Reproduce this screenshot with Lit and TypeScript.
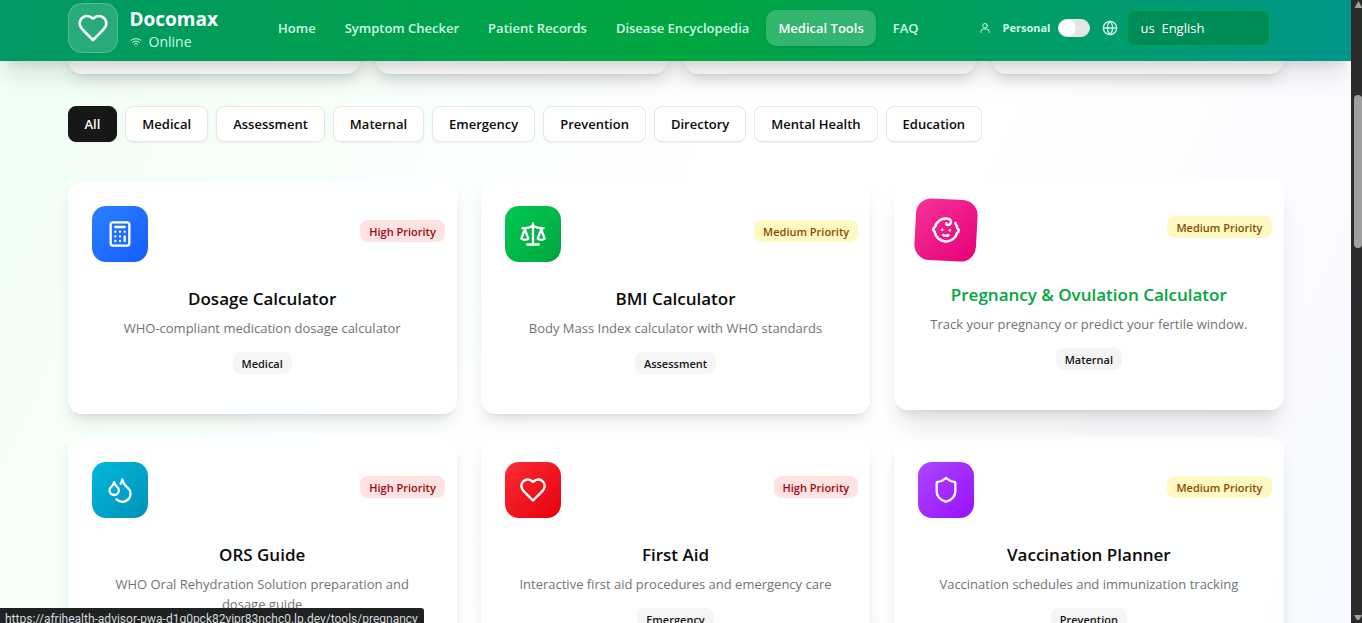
import { LitElement, html, svg, css, SVGTemplateResult } from "lit";
import { customElement, state } from "lit/decorators.js";
import { classMap } from "lit/directives/class-map.js";

const icons: Record<string, SVGTemplateResult> = {
  heart: svg`<path d="M19 14c1.490-1.460 3-3.210 3-5.500A5.500 5.500 0 0 0 16.500 3c-1.760 0-3 .5-4.500 2-1.500-1.500-2.740-2-4.500-2A5.500 5.500 0 0 0 2 8.500c0 2.300 1.500 4.050 3 5.500l7 7Z"/>`,
  wifi: svg`<path d="M12 20h.01M2 8.820a15 15 0 0 1 20 0M5 12.859a10 10 0 0 1 14 0M8.500 16.429a5 5 0 0 1 7 0"/>`,
  user: svg`<circle cx="12" cy="7.500" r="4.500"/><path d="M4 21v-2a5 5 0 0 1 5-5h6a5 5 0 0 1 5 5v2"/>`,
  globe: svg`<circle cx="12" cy="12" r="10"/><path d="M12 2a14.500 14.500 0 0 0 0 20 14.500 14.500 0 0 0 0-20M2 12h20"/>`,
  chevron: svg`<path d="m6 9 6 6 6-6"/>`,
  calculator: svg`<rect width="16" height="20" x="4" y="2" rx="2"/><path d="M8 6h8M16 14v4M16 10h.01M12 10h.01M8 10h.01M12 14h.01M8 14h.01M12 18h.01M8 18h.01"/>`,
  scale: svg`<path d="m16 16 3-8 3 8c-.87.65-1.920 1-3 1s-2.130-.35-3-1ZM2 16l3-8 3 8c-.87.65-1.920 1-3 1s-2.130-.35-3-1ZM7 21h10M12 3v18M3 7h2c2 0 5-1 7-2 2 1 5 2 7 2h2"/>`,
  baby: svg`<path d="M9 12h.01M15 12h.01M10 16c.5.3 1.200.5 2 .5s1.500-.2 2-.5"/><path d="M19 6.300a9 9 0 0 1 1.800 3.900 2 2 0 0 1 0 3.600 9 9 0 0 1-17.600 0 2 2 0 0 1 0-3.600A9 9 0 0 1 12 3c2 0 3.500 1.100 3.500 2.500s-.9 2.500-2 2.500c-.8 0-1.500-.4-1.500-1"/>`,
  droplets: svg`<path d="M7 16.300c2.200 0 4-1.830 4-4.050 0-1.160-.57-2.260-1.710-3.190S7.290 6.750 7 5.300c-.29 1.450-1.140 2.840-2.290 3.760S3 11.100 3 12.250c0 2.220 1.800 4.050 4 4.050z"/><path d="M12.560 6.600A10.970 10.970 0 0 0 14 3.020c.5 2.500 2 4.900 4 6.500s3 3.500 3 5.500a6.980 6.980 0 0 1-11.910 4.970"/>`,
  shield: svg`<path d="M20 13c0 5-3.500 7.500-7.660 8.950a1 1 0 0 1-.67-.01C7.500 20.500 4 18 4 13V6a1 1 0 0 1 1-1c2 0 4.500-1.200 6.240-2.720a1.170 1.170 0 0 1 1.520 0C14.510 3.810 17 5 19 5a1 1 0 0 1 1 1z"/>`,
};

const icon = (name: string) => html`<svg class="icon" viewBox="0 0 24 24" aria-hidden="true">${icons[name]}</svg>`;

interface Tool {
  title: string;
  text: string;
  category: string;
  priority: "High" | "Medium";
  icon: string;
  tone: string;
  lifted?: boolean;
}

const tools: Tool[] = [
  { title: "Dosage Calculator", text: "WHO-compliant medication dosage calculator", category: "Medical", priority: "High", icon: "calculator", tone: "blue" },
  { title: "BMI Calculator", text: "Body Mass Index calculator with WHO standards", category: "Assessment", priority: "Medium", icon: "scale", tone: "green" },
  { title: "Pregnancy & Ovulation Calculator", text: "Track your pregnancy or predict your fertile window.", category: "Maternal", priority: "Medium", icon: "baby", tone: "pink", lifted: true },
  { title: "ORS Guide", text: "WHO Oral Rehydration Solution preparation and dosage guide", category: "Medical", priority: "High", icon: "droplets", tone: "cyan" },
  { title: "First Aid", text: "Interactive first aid procedures and emergency care", category: "Emergency", priority: "High", icon: "heart", tone: "red" },
  { title: "Vaccination Planner", text: "Vaccination schedules and immunization tracking", category: "Prevention", priority: "Medium", icon: "shield", tone: "purple" },
];

const links = ["Home", "Symptom Checker", "Patient Records", "Disease Encyclopedia", "Medical Tools", "FAQ"];
const filters = ["All", "Medical", "Assessment", "Maternal", "Emergency", "Prevention", "Directory", "Mental Health", "Education"];

const iconStyles = css`
  .icon {
    display: block;
    width: 16px;
    height: 16px;
    flex: none;
    fill: none;
    stroke: currentColor;
    stroke-width: 2;
    stroke-linecap: round;
    stroke-linejoin: round;
  }
`;

@customElement("site-header")
class SiteHeader extends LitElement {
  static styles = [
    iconStyles,
    css`
      :host {
        display: block;
        position: relative;
        z-index: 2;
        color: #fff;
        background: linear-gradient(90deg, #009966, #00a63e 50%, #009689);
        box-shadow: 0 20px 25px -5px rgba(0, 0, 0, 0.1), 0 8px 10px -6px rgba(0, 0, 0, 0.1);
      }
      .bar {
        box-sizing: border-box;
        max-width: 1280px;
        margin: 0 auto;
        padding: 3px 45px 8px 32px;
        display: flex;
        align-items: center;
        justify-content: space-between;
      }
      .brand {
        display: flex;
        align-items: center;
        gap: 12px;
      }
      .logo {
        box-sizing: border-box;
        width: 50px;
        height: 50px;
        display: grid;
        place-items: center;
        border: 1px solid rgba(255, 255, 255, 0.2);
        border-radius: 14px;
        background: rgba(255, 255, 255, 0.16);
      }
      .logo .icon {
        width: 32px;
        height: 32px;
      }
      .name {
        margin: 0;
        padding-top: 3px;
        font-size: 19px;
        line-height: 24px;
        font-weight: 700;
      }
      .status {
        display: flex;
        align-items: center;
        gap: 7px;
        font-size: 14px;
        line-height: 22px;
        color: #d0fae5;
      }
      .status .icon {
        width: 12px;
        height: 12px;
      }
      .nav {
        display: flex;
        gap: 5px;
      }
      .link {
        padding: 8px 12px;
        border-radius: 10px;
        font-size: 13px;
        line-height: 20px;
        font-weight: 600;
        color: #d0fae5;
        text-decoration: none;
        white-space: nowrap;
      }
      .link.active {
        color: #fff;
        background: rgba(255, 255, 255, 0.2);
        box-shadow: 0 1px 3px rgba(0, 0, 0, 0.15);
      }
      .tools {
        display: flex;
        align-items: center;
        color: #d0fae5;
      }
      .mode {
        display: flex;
        align-items: center;
        gap: 12px;
        font-size: 11px;
        line-height: 16px;
        font-weight: 700;
      }
      .mode .icon {
        width: 12px;
        height: 12px;
      }
      .switch {
        appearance: none;
        box-sizing: border-box;
        width: 32px;
        height: 18px;
        margin: 0 12px 0 8px;
        border: 1px solid #e5e5e5;
        border-radius: 9px;
        background: radial-gradient(circle at 8px 8px, #fff 8px, transparent 9px) #e5e5e5;
      }
      .lang {
        position: relative;
        margin-left: 9px;
      }
      .select {
        appearance: none;
        box-sizing: border-box;
        display: block;
        width: 143px;
        height: 36px;
        padding: 0 12px;
        border: 1px solid #00a650;
        border-radius: 8px;
        background: #008c56;
        color: #fff;
        font-family: inherit;
        font-size: 13px;
      }
      .lang .icon {
        position: absolute;
        right: 12px;
        top: 10px;
        color: #3d7a62;
        stroke-width: 1;
        pointer-events: none;
      }
    `,
  ];

  render() {
    return html`
      <header class="bar">
        <div class="brand">
          <div class="logo">${icon("heart")}</div>
          <div>
            <h1 class="name">Docomax</h1>
            <div class="status">${icon("wifi")}<span>Online</span></div>
          </div>
        </div>
        <nav class="nav">
          ${links.map((l) => html`<a href="#" class=${classMap({ link: true, active: l === "Medical Tools" })}>${l}</a>`)}
        </nav>
        <div class="tools">
          <label class="mode" for="mode">${icon("user")}<span>Personal</span></label>
          <input class="switch" id="mode" type="checkbox" role="switch" />
          ${icon("globe")}
          <div class="lang">
            <select class="select" aria-label="Language">
              <option>us&nbsp; English</option>
            </select>
            ${icon("chevron")}
          </div>
        </div>
      </header>
    `;
  }
}

@customElement("tool-card")
class ToolCard extends LitElement {
  static properties = { tool: { attribute: false } };
  declare tool: Tool;

  static styles = [
    iconStyles,
    css`
      :host {
        display: block;
      }
      .card {
        box-sizing: border-box;
        height: 100%;
        padding: 24px 24px 40px;
        border-radius: 14px;
        background: rgba(255, 255, 255, 0.85);
        box-shadow: 0 10px 15px -3px rgba(0, 0, 0, 0.1), 0 4px 6px -4px rgba(0, 0, 0, 0.1);
      }
      .card.lifted {
        transform: translateY(-4px);
        box-shadow: 0 20px 25px -5px rgba(0, 0, 0, 0.1), 0 8px 10px -6px rgba(0, 0, 0, 0.1);
      }
      .top {
        display: flex;
        justify-content: space-between;
        align-items: flex-start;
        margin-right: -12px;
      }
      .tile {
        width: 56px;
        height: 56px;
        display: grid;
        place-items: center;
        border-radius: 14px;
        color: #fff;
      }
      .tile .icon {
        width: 28px;
        height: 28px;
      }
      .lifted .tile {
        transform: scale(1.1) rotate(3deg);
      }
      .blue { background: linear-gradient(135deg, #2b7fff, #155dfc); }
      .green { background: linear-gradient(135deg, #00c950, #00a63e); }
      .pink { background: linear-gradient(135deg, #f6339a, #e60076); }
      .cyan { background: linear-gradient(135deg, #00b8db, #0092b8); }
      .red { background: linear-gradient(135deg, #fb2c36, #e7000b); }
      .purple { background: linear-gradient(135deg, #ad46ff, #9810fa); }
      .badge {
        padding: 4px 9px 2px;
        border-radius: 8px;
        font-size: 11px;
        line-height: 16px;
        font-weight: 600;
      }
      .priority {
        margin-top: 14px;
      }
      .high { background: #ffe2e2; color: #9f0712; }
      .medium { background: #fef9c2; color: #894b00; }
      .category { background: #f5f5f5; color: #171717; }
      .body {
        display: flex;
        flex-direction: column;
        align-items: center;
        text-align: center;
        margin-top: 23px;
      }
      .title {
        margin: 0;
        font-size: 17px;
        line-height: 28px;
        font-weight: 600;
        color: #0a0a0a;
      }
      .lifted .title {
        color: #00a63e;
      }
      .text {
        margin: 5px 0 14px;
        padding: 0 4px;
        font-size: 13px;
        line-height: 20px;
        color: #737373;
      }
    `,
  ];

  render() {
    const t = this.tool;
    return html`
      <article class=${classMap({ card: true, lifted: !!t.lifted })}>
        <div class="top">
          <div class="tile ${t.tone}">${icon(t.icon)}</div>
          <span class="badge priority ${t.priority.toLowerCase()}">${t.priority} Priority</span>
        </div>
        <div class="body">
          <h3 class="title">${t.title}</h3>
          <p class="text">${t.text}</p>
          <span class="badge category">${t.category}</span>
        </div>
      </article>
    `;
  }
}

@customElement("app-root")
class AppRoot extends LitElement {
  @state() private active = "All";

  static styles = css`
    :host {
      display: grid;
      grid-template-columns: minmax(0, 1fr) 11px;
      height: 100vh;
      overflow: hidden;
      position: relative;
      font-family: "Open Sans", "Noto Sans", sans-serif;
    }
    .page {
      min-height: 0;
      overflow: hidden;
      background: linear-gradient(115deg, #f0fff4, #fff 50%, #fff 65%, #f6f9ff);
    }
    .content {
      box-sizing: border-box;
      max-width: 1280px;
      margin: 0 auto;
      padding: 0 32px;
    }
    .stats {
      display: grid;
      grid-template-columns: repeat(4, 1fr);
      gap: 16px;
      margin-top: -47px;
    }
    .stat {
      height: 60px;
      border-radius: 14px;
      background: #fff;
      box-shadow: 0 10px 15px -3px rgba(0, 0, 0, 0.1), 0 4px 6px -4px rgba(0, 0, 0, 0.1);
    }
    .filters {
      display: flex;
      flex-wrap: wrap;
      gap: 8px;
      margin: 32px 0 40px;
    }
    .filter {
      padding: 7px 16px;
      border: 1px solid #e5e5e5;
      border-radius: 8px;
      background: #fff;
      color: #0a0a0a;
      font-family: inherit;
      font-size: 13px;
      line-height: 20px;
      font-weight: 600;
      box-shadow: 0 1px 2px rgba(0, 0, 0, 0.05);
    }
    .filter.on {
      border-color: #171717;
      background: #171717;
      color: #fafafa;
    }
    .grid {
      display: grid;
      grid-template-columns: repeat(3, 1fr);
      gap: 24px;
    }
    .rail {
      display: flex;
      flex-direction: column;
      align-items: flex-end;
      background: #2b2b2b;
      overflow: hidden;
    }
    .arrow {
      width: 8px;
      height: 8px;
      fill: #a0a0a0;
    }
    .thumb {
      width: 8px;
      height: 153px;
      margin-top: 87px;
      margin-bottom: auto;
      border-radius: 4px;
      background: #9f9f9f;
    }
    .hint {
      position: absolute;
      left: 0;
      bottom: 0;
      z-index: 3;
      box-sizing: border-box;
      height: 15px;
      overflow: hidden;
      padding: 1px 6px 0 5px;
      border-radius: 0 3px 0 0;
      background: #202222;
      color: #d6dade;
      font-family: Roboto, sans-serif;
      font-size: 12px;
      line-height: 20px;
      white-space: nowrap;
    }
  `;

  render() {
    return html`
      <div class="page">
        <site-header></site-header>
        <main class="content">
          <div class="stats">${[0, 1, 2, 3].map(() => html`<div class="stat"></div>`)}</div>
          <div class="filters">
            ${filters.map(
              (f) => html`<button type="button" class=${classMap({ filter: true, on: f === this.active })} @click=${() => (this.active = f)}>${f}</button>`
            )}
          </div>
          <div class="grid">${tools.map((t) => html`<tool-card .tool=${t}></tool-card>`)}</div>
        </main>
      </div>
      <div class="rail" aria-hidden="true">
        <svg class="arrow" viewBox="0 0 8 8"><path d="M4.500 1 8.500 8H0.500Z" /></svg>
        <div class="thumb"></div>
        <svg class="arrow" viewBox="0 0 8 8"><path d="M0 0H8L5 5H3Z" /></svg>
      </div>
      <div class="hint">https://afrihealth-advisor-pwa-d1g0pck82yipr83nchc0.lp.dev/tools/pregnancy</div>
    `;
  }
}
